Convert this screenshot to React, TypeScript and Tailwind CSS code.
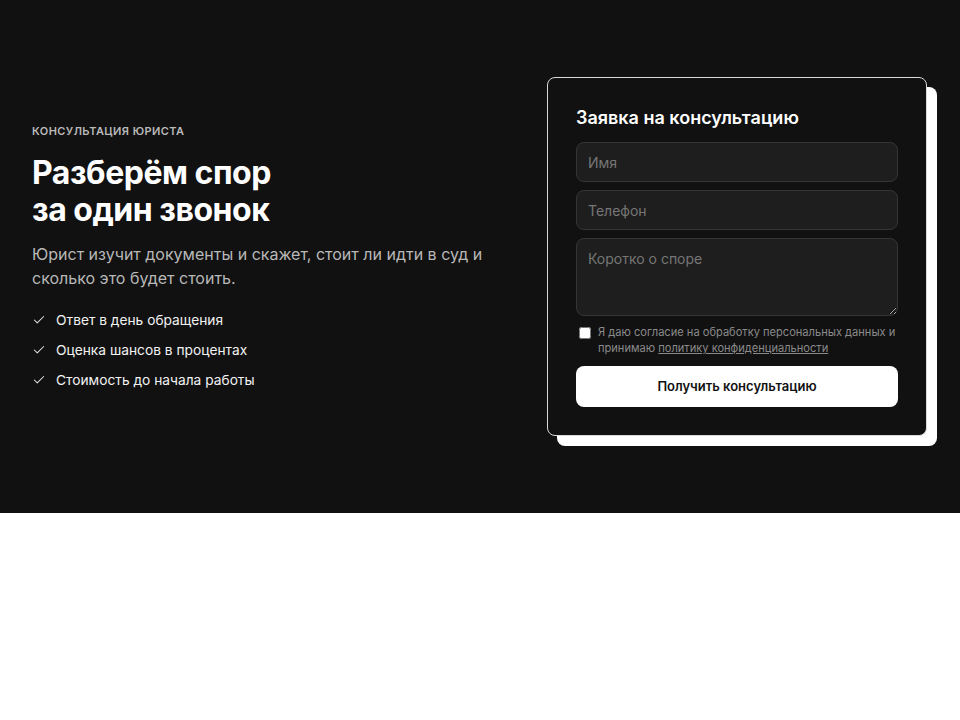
import React from 'react';
import { Check } from 'lucide-react';

const points = ['Ответ в день обращения', 'Оценка шансов в процентах', 'Стоимость до начала работы'];

export default function App() {
  return (
    <div className="min-h-screen bg-white" style={{ fontFamily: 'Inter, "Noto Sans", sans-serif' }}>
      <section className="bg-[#111111] text-white py-[77px]">
        <div className="pl-8 pr-[33px] flex items-center justify-between">
          <div className="w-[480px]">
            <p className="text-[11px] font-semibold tracking-[0.04em] uppercase text-[#b9b9b9] leading-4">
              Консультация юриста
            </p>
            <h1 className="mt-[15px] text-[32px] font-bold leading-[37px] tracking-[-0.015em]">
              Разберём спор
              <br />
              за один звонок
            </h1>
            <p className="mt-3.5 text-base leading-6 text-[#b8b8b8]">
              Юрист изучит документы и скажет, стоит ли идти в суд и сколько это будет стоить.
            </p>
            <ul className="mt-5 flex flex-col gap-2.5">
              {points.map((p) => (
                <li key={p} className="flex items-center gap-2.5 text-[13.75px] leading-5 text-[#f2f2f2]">
                  <Check className="w-3.5 h-3.5 text-[#e5e5e5]" strokeWidth={1.75} />
                  {p}
                </li>
              ))}
            </ul>
          </div>

          <div className="relative w-[380px] shrink-0">
            <div className="absolute left-[10px] top-[10px] w-full h-full rounded-lg bg-white" />
            <form className="relative rounded-lg border border-[#d9d9d9] bg-[#111111] p-7">
              <h2 className="text-lg font-semibold leading-6">Заявка на консультацию</h2>
              <div className="mt-3 flex flex-col gap-2">
                <input
                  placeholder="Имя"
                  className="h-10 w-full rounded-lg border border-[#353535] bg-[#1e1e1e] px-[11px] text-sm text-white placeholder-[#767676] outline-none"
                />
                <input
                  placeholder="Телефон"
                  className="h-10 w-full rounded-lg border border-[#353535] bg-[#1e1e1e] px-[11px] text-sm text-white placeholder-[#767676] outline-none"
                />
                <textarea
                  placeholder="Коротко о споре"
                  className="h-[78px] w-full rounded-lg border border-[#353535] bg-[#1e1e1e] px-[11px] py-2.5 text-sm leading-5 text-white placeholder-[#767676] outline-none"
                />
              </div>
              <label className="mt-2 flex items-start gap-[7px] pl-[3px] text-[11.1px] leading-4 text-[#8a8a8a]">
                <input type="checkbox" className="m-0 mt-[3px] h-3 w-3 shrink-0" />
                <span>
                  Я даю согласие на обработку персональных данных и принимаю{' '}
                  <a className="underline">политику конфиденциальности</a>
                </span>
              </label>
              <button
                type="button"
                className="mt-[10px] h-[41px] w-full rounded-lg bg-white text-[13px] font-semibold text-[#111111]"
              >
                Получить консультацию
              </button>
            </form>
          </div>
        </div>
      </section>
    </div>
  );
}
